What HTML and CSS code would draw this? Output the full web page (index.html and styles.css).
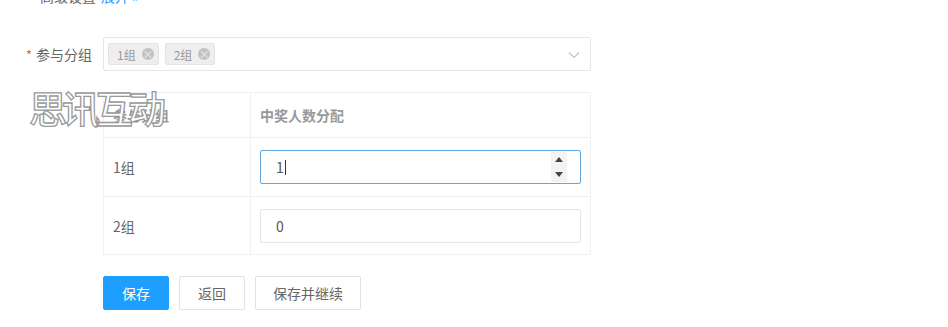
FILE: index.html
```html
<!DOCTYPE html>
<html lang="zh-CN">
<head>
    <meta charset="UTF-8">
    <meta name="viewport" content="width=device-width, initial-scale=1.0">
    <title>参与分组</title>
    <link rel="stylesheet" href="styles.css">
</head>
<body>
    <div class="form-page">
        <div class="form-item form-top">
            <label class="form-label">高级设置</label>
            <a class="toggle-link" href="#">展开 »</a>
        </div>

        <div class="form-item form-group">
            <label class="form-label"><span class="required">*</span>参与分组</label>
            <div class="select-box">
                <span class="tag">1组<i class="tag-close">×</i></span>
                <span class="tag">2组<i class="tag-close">×</i></span>
                <svg class="select-arrow" width="12" height="8" viewBox="0 0 12 8">
                    <path d="M1 1.5 L6 6.5 L11 1.5" fill="none" stroke="#c2c2c2" stroke-width="1.1"/>
                </svg>
            </div>
        </div>

        <table class="alloc-table">
            <thead>
                <tr>
                    <th class="col-group">参与分组</th>
                    <th>中奖人数分配</th>
                </tr>
            </thead>
            <tbody>
                <tr>
                    <td>1组</td>
                    <td>
                        <div class="num-input is-focus">
                            <span class="num-value">1<span class="caret"></span></span>
                            <span class="spinner">
                                <i class="spin-up"></i>
                                <i class="spin-down"></i>
                            </span>
                        </div>
                    </td>
                </tr>
                <tr class="row-last">
                    <td>2组</td>
                    <td>
                        <div class="num-input">
                            <span class="num-value">0</span>
                        </div>
                    </td>
                </tr>
            </tbody>
        </table>

        <div class="form-actions">
            <button class="btn btn-primary">保存</button>
            <button class="btn btn-back">返回</button>
            <button class="btn btn-wide">保存并继续</button>
        </div>

        <div class="watermark">思讯互动</div>
    </div>
</body>
</html>
```

FILE: styles.css
```css
* {
    margin: 0;
    padding: 0;
    box-sizing: border-box;
}

body {
    font-family: 'Noto Sans CJK SC', 'Liberation Sans', sans-serif;
    font-size: 14px;
    color: #666;
    background: #fff;
    overflow: hidden;
}

.form-page {
    position: relative;
    width: 948px;
    height: 327px;
}

.form-item {
    display: flex;
    align-items: center;
}

.form-label {
    width: 103px;
    padding-right: 11px;
    text-align: right;
    color: #666;
}

.form-top {
    height: 20px;
    margin-top: -14px;
}

.form-top .form-label {
    width: 96px;
    padding-right: 0;
}

.toggle-link {
    margin-left: 5px;
    color: #1e9fff;
    text-decoration: none;
}

.form-group {
    margin-top: 31px;
}

.required {
    color: #ff5722;
    margin-right: 4px;
    font-size: 13px;
}

.select-box {
    position: relative;
    display: flex;
    align-items: center;
    gap: 6px;
    width: 488px;
    height: 34px;
    padding-left: 4px;
    border: 1px solid #e6e6e6;
    border-radius: 2px;
}

.tag {
    display: inline-flex;
    align-items: center;
    height: 22px;
    padding: 0 4px 0 8px;
    background: #eeeeee;
    border: 1px solid #e4e4e4;
    border-radius: 2px;
    color: #999;
    font-size: 12px;
}

.tag-close {
    display: inline-flex;
    align-items: center;
    justify-content: center;
    width: 12px;
    height: 12px;
    margin-left: 6px;
    border-radius: 50%;
    background: #c2c2c2;
    color: #eee;
    font-style: normal;
    font-size: 11px;
    line-height: 1;
}

.select-arrow {
    position: absolute;
    right: 10px;
    top: 13px;
}

.alloc-table {
    margin: 21px 0 0 103px;
    width: 488px;
    border-collapse: collapse;
}

.alloc-table th,
.alloc-table td {
    border: 1px solid #f0f0f0;
    text-align: left;
    padding: 0 9px;
}

.alloc-table th {
    height: 45px;
    font-weight: bold;
    color: #999;
}

.alloc-table td {
    height: 59px;
    color: #666;
}

.alloc-table .row-last td {
    height: 58px;
}

.alloc-table .col-group {
    width: 147px;
}

.num-input {
    position: relative;
    display: flex;
    align-items: center;
    width: 321px;
    height: 34px;
    padding-left: 15px;
    border: 1px solid #e6e6e6;
    border-radius: 2px;
    color: #555;
}

.num-input.is-focus {
    border-color: #5fa8e0;
}

.caret {
    display: inline-block;
    width: 1px;
    height: 15px;
    margin-left: 1px;
    background: #333;
    vertical-align: -2px;
}

.spinner {
    position: absolute;
    right: 13px;
    top: 1px;
    bottom: 1px;
    width: 16px;
    background: #f3f3f3;
    display: flex;
    flex-direction: column;
    align-items: center;
    justify-content: space-between;
    padding: 5px 0;
}

.spin-up,
.spin-down {
    width: 0;
    height: 0;
    border-left: 4px solid transparent;
    border-right: 4px solid transparent;
}

.spin-up {
    border-bottom: 5px solid #444;
}

.spin-down {
    border-top: 5px solid #444;
}

.form-actions {
    display: flex;
    gap: 10px;
    margin: 21px 0 0 103px;
}

.btn {
    height: 34px;
    padding: 0;
    white-space: nowrap;
    font-family: inherit;
    font-size: 14px;
    color: #666;
    background: #fff;
    border: 1px solid #e2e2e2;
    border-radius: 2px;
    cursor: pointer;
}

.btn-primary {
    width: 66px;
    background: #1e9fff;
    border-color: #1e9fff;
    color: #fff;
}

.btn-back {
    width: 66px;
}

.btn-wide {
    width: 106px;
}

.watermark {
    position: absolute;
    left: 29px;
    top: 97px;
    font-size: 38px;
    font-weight: 500;
    line-height: 48px;
    color: #fff;
    -webkit-text-stroke: 1.3px #999;
    letter-spacing: -5px;
    pointer-events: none;
}
```
